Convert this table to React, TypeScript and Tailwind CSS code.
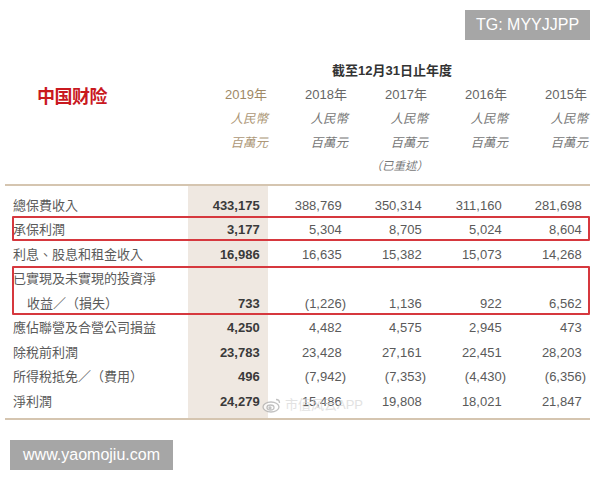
import React from "react";

type Row = { label: string; v: string[]; indent?: boolean };

const rows: Row[] = [
  { label: "總保費收入", v: ["433,175", "388,769", "350,314", "311,160", "281,698"] },
  { label: "承保利潤", v: ["3,177", "5,304", "8,705", "5,024", "8,604"] },
  { label: "利息、股息和租金收入", v: ["16,986", "16,635", "15,382", "15,073", "14,268"] },
  { label: "已實現及未實現的投資淨", v: ["", "", "", "", ""] },
  { label: "收益／（損失）", indent: true, v: ["733", "(1,226)", "1,136", "922", "6,562"] },
  { label: "應佔聯營及合營公司損益", v: ["4,250", "4,482", "4,575", "2,945", "473"] },
  { label: "除稅前利潤", v: ["23,783", "23,428", "27,161", "22,451", "28,203"] },
  { label: "所得稅抵免／（費用）", v: ["496", "(7,942)", "(7,353)", "(4,430)", "(6,356)"] },
  { label: "淨利潤", v: ["24,279", "15,486", "19,808", "18,021", "21,847"] },
];

const years = ["2019年", "2018年", "2017年", "2016年", "2015年"];

function Num({ s }: { s: string }) {
  if (!s) return <span>&nbsp;</span>;
  const neg = s.startsWith("(");
  return (
    <span>
      {s}
      {!neg && <span className="invisible">)</span>}
    </span>
  );
}

export default function App() {
  return (
    <div
      className="relative w-[600px] h-[480px] overflow-hidden bg-white pl-[5px]"
      style={{ fontFamily: '"Liberation Sans", "Noto Sans CJK TC", sans-serif' }}
    >
      <div className="relative pt-[59px]">
        {/* header */}
        <div className="grid grid-cols-[183px_repeat(5,80px)] text-[#5e5e5e]">
          <div />
          <div className="col-span-5 h-[24px] flex items-center justify-center pl-[8px] text-[13px] font-bold text-[#333]">
            截至12月31日止年度
          </div>

          <div
            className="h-[24px] flex items-center pl-[32px] text-[18px] font-bold text-[#c9191f] tracking-[-0.5px]"
            style={{ fontFamily: '"Noto Sans CJK SC", serif' }}
          >
            中国财险
          </div>
          {years.map((y, i) => (
            <div
              key={y}
              className={`h-[24px] flex items-center justify-end pr-[1px] text-[13px] ${i === 0 ? "text-[#a08966]" : "text-[#666]"}`}
            >
              {y}
            </div>
          ))}

          <div />
          {years.map((y, i) => (
            <div
              key={y}
              className={`h-[24px] flex items-center justify-end text-[12.5px] italic ${i === 0 ? "text-[#ad9777]" : "text-[#777]"}`}
            >
              人民幣
            </div>
          ))}

          <div />
          {years.map((y, i) => (
            <div
              key={y}
              className={`h-[24px] flex items-center justify-end text-[12.5px] italic ${i === 0 ? "text-[#ad9777]" : "text-[#777]"}`}
            >
              百萬元
            </div>
          ))}

          <div />
          <div />
          <div />
          <div className="h-[24px] flex items-center justify-end text-[11.5px] italic text-[#777]">
            （已重述）
          </div>
          <div />
          <div />
        </div>

        {/* body */}
        <div className="relative mt-[5px] w-[585px] border-t-2 border-b-2 border-[#d5c5b0] flex">
          <div className="w-[183px] pt-[7px] pb-[4.5px] text-[13px] text-[#5a5a5a]">
            {rows.map((r) => (
              <div
                key={r.label}
                className={`h-[24.5px] flex items-center whitespace-nowrap ${r.indent ? "pl-[22px]" : "pl-[8px]"}`}
              >
                {r.label}
              </div>
            ))}
          </div>
          {years.map((y, ci) => (
            <div
              key={y}
              className={`w-[80px] pt-[7px] pb-[4.5px] text-[13px] ${ci === 0 ? "bg-[#efe8e1] font-bold text-[#3a3a3a] pr-[4px]" : "text-[#5a5a5a] pr-[2px]"}`}
            >
              {rows.map((r) => (
                <div key={r.label} className="h-[24.5px] flex items-center justify-end whitespace-nowrap">
                  <Num s={r.v[ci]} />
                </div>
              ))}
            </div>
          ))}

          {/* red highlight boxes */}
          <div className="absolute left-[7px] top-[30px] w-[578px] h-[25px] border-2 border-[#d6383e] rounded-[1px]" />
          <div className="absolute left-[7px] top-[80px] w-[578px] h-[49px] border-2 border-[#d6383e] rounded-[1px]" />

          {/* weibo watermark */}
          <div className="absolute left-[257px] top-[209px] flex items-center gap-[3px] opacity-70">
            <svg width="20" height="16" viewBox="0 0 20 16" fill="none" stroke="#a9a9a9" strokeWidth="1.3">
              <ellipse cx="9" cy="10" rx="8" ry="5" fill="white" />
              <ellipse cx="8.5" cy="10.5" rx="3.5" ry="2.5" />
              <circle cx="8" cy="10.8" r="1" fill="#a9a9a9" />
              <path d="M14 2.5c2 0 3.5 1.5 3.5 3.5" />
            </svg>
            <span className="text-[13px] text-[#d6d6d6]">市值风云APP</span>
          </div>
        </div>
      </div>

      {/* TG badge */}
      <div className="absolute left-[465px] top-[10px] w-[125px] h-[30px] bg-[#a6a6a6] text-white text-[16px] flex items-center justify-center">
        TG: MYYJJPP
      </div>

      {/* site badge */}
      <div className="absolute left-[10px] top-[440px] w-[163px] h-[30px] bg-[#a6a6a6] text-white text-[16px] flex items-center justify-center">
        www.yaomojiu.com
      </div>
    </div>
  );
}
